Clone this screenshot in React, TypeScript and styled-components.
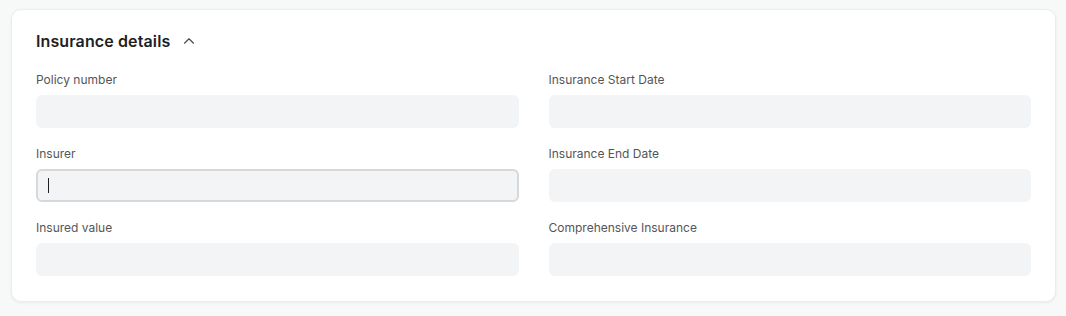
import { Fragment } from "react";
import styled, { createGlobalStyle } from "styled-components";

const GlobalStyle = createGlobalStyle`
  html, body {
    margin: 0;
    padding: 0;
    background: #f7f8f8;
    font-family: Inter, "Noto Sans", sans-serif;
  }
`;

const fields = [
  { left: "Policy number", right: "Insurance Start Date", focused: false },
  { left: "Insurer", right: "Insurance End Date", focused: true },
  { left: "Insured value", right: "Comprehensive Insurance", focused: false },
];

const ChevronUp = () => (
  <svg width="12" height="12" viewBox="0 0 12 12" fill="none">
    <path d="M1.5 8.2 L6 3.8 L10.5 8.2" stroke="#4b4b4b" strokeWidth="1.2" strokeLinecap="round" strokeLinejoin="round" />
  </svg>
);

const Field = ({ label, focused }: { label: string; focused?: boolean }) => (
  <FieldWrap>
    <Label>{label}</Label>
    <InputBox $focused={focused}>{focused && <Caret />}</InputBox>
  </FieldWrap>
);

const App = () => {
  return (
    <Page>
      <GlobalStyle />
      <Card>
        <Header>
          <Title>Insurance details</Title>
          <ChevronUp />
        </Header>
        <Grid>
          {fields.map((row) => (
            <Fragment key={row.left}>
              <Field label={row.left} focused={row.focused} />
              <Field label={row.right} />
            </Fragment>
          ))}
        </Grid>
      </Card>
    </Page>
  );
};

export default App;

const Page = styled.div`
  padding: 9px 10px 15px 11px;
`;

const Card = styled.div`
  background: #ffffff;
  border: 1px solid #ebecec;
  border-radius: 10px;
  box-shadow: 0 1px 3px rgba(0, 0, 0, 0.06);
  padding: 19px 24px 25px 24px;
`;

const Header = styled.div`
  display: flex;
  align-items: center;
  gap: 13px;
  height: 24px;
  margin-bottom: 17px;
`;

const Title = styled.h2`
  margin: 0;
  font-size: 16px;
  font-weight: 600;
  letter-spacing: 0.12px;
  color: #1f1f23;
  line-height: 24px;
`;

const Grid = styled.div`
  display: grid;
  grid-template-columns: 1fr 1fr;
  column-gap: 30px;
  row-gap: 16px;
`;

const FieldWrap = styled.div`
  display: flex;
  flex-direction: column;
  gap: 5px;
`;

const Label = styled.label`
  font-size: 12px;
  line-height: 20px;
  color: #555558;
`;

const InputBox = styled.div<{ $focused?: boolean }>`
  box-sizing: border-box;
  height: 33px;
  border-radius: 6px;
  background: #f3f4f6;
  border: ${(p) => (p.$focused ? "2px solid #d7d8da" : "none")};
  display: flex;
  align-items: center;
  padding-left: ${(p) => (p.$focused ? "10px" : "12px")};
`;

const Caret = styled.span`
  width: 1px;
  height: 15px;
  background: #1f1f23;
`;
